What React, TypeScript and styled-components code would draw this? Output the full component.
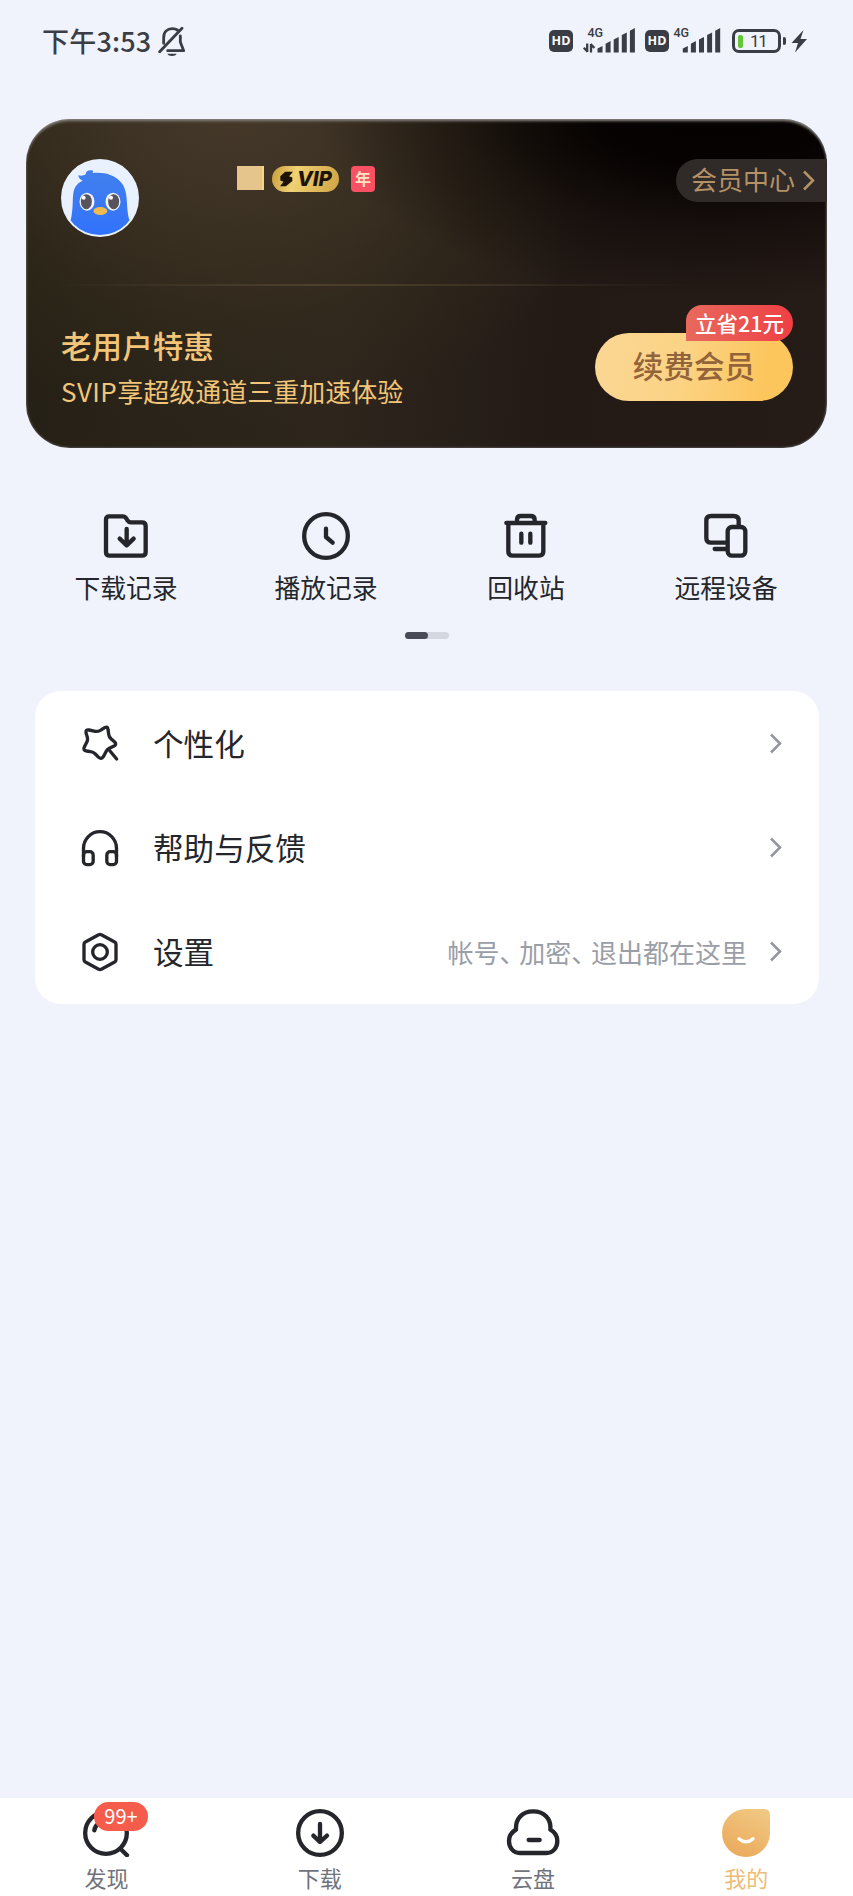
import React from 'react';
import styled, { createGlobalStyle } from 'styled-components';

const GlobalStyle = createGlobalStyle`
  * { box-sizing: border-box; }
  body {
    margin: 0;
    background: #f0f3fb;
    font-family: 'Noto Sans CJK SC', 'Noto Sans', sans-serif;
    color: #24262b;
  }
  svg { display: block; flex: none; }
`;

const Screen = styled.div`
  width: 853px;
  height: 1896px;
  display: flex;
  flex-direction: column;
  background: #f0f3fb;
  overflow: hidden;
  white-space: nowrap;
`;

/* ---------- status bar ---------- */

const StatusBar = styled.header`
  height: 119px;
  flex: none;
  padding: 25px 45px 0 42px;
  display: flex;
  justify-content: space-between;
  align-items: flex-start;
  color: #3a3d45;
`;

const Clock = styled.div`
  display: flex;
  align-items: center;
  gap: 7px;
  height: 32px;
`;

const Time = styled.span`
  font-size: 27px;
  font-weight: 500;
  line-height: 32px;
  letter-spacing: 0.2px;
`;

const Indicators = styled.div`
  display: flex;
  align-items: center;
  height: 32px;
`;

const HdBadge = styled.span`
  width: 24px;
  height: 22px;
  border-radius: 5px;
  background: #3a3d45;
  color: #fff;
  font: 700 12.5px/22px 'Open Sans', sans-serif;
  text-align: center;
`;

const Signal = styled.svg<{ $left: number; $right: number }>`
  margin: 0 ${p => p.$right}px 0 ${p => p.$left}px;
  overflow: visible;
`;

const Battery = styled.div`
  position: relative;
  width: 49px;
  height: 24px;
  margin-right: 10px;
  border: 3px solid #3a3d45;
  border-radius: 7px;
  display: flex;
  align-items: center;
  padding-left: 3px;
  font: 400 17px/18px Roboto, sans-serif;
  letter-spacing: -1.2px;

  &::after {
    content: '';
    position: absolute;
    left: 48px;
    top: 5px;
    width: 3px;
    height: 8px;
    border-radius: 1px 2px 2px 1px;
    background: #3a3d45;
  }
`;

const Charge = styled.i`
  width: 5px;
  height: 13px;
  border-radius: 2px;
  background: #62c637;
  margin-right: 7px;
`;

/* ---------- membership card ---------- */

const MemberCard = styled.section`
  width: 801px;
  height: 329px;
  flex: none;
  margin-left: 26px;
  border-radius: 44px;
  overflow: hidden;
  display: flex;
  flex-direction: column;
  box-shadow: inset 0 3px 3px -1px #85817c, inset 0 0 2px 1px #4b4744;
  background:
    radial-gradient(ellipse 400px 190px at 690px -10px, #040100 0%, rgba(4, 1, 0, 0.95) 30%, rgba(10, 4, 3, 0.45) 65%, rgba(10, 4, 3, 0) 100%),
    radial-gradient(ellipse 400px 330px at 205px -20px, rgba(70, 57, 42, 1) 0%, rgba(62, 51, 36, 0.8) 40%, rgba(54, 46, 28, 0.4) 70%, rgba(50, 42, 28, 0) 100%),
    linear-gradient(95deg, #252015 0%, #2e261d 40%, #231a16 66%, #251b17 100%);
`;

const Profile = styled.div`
  height: 164px;
  flex: none;
  padding: 40px 0 0 35px;
  display: flex;
  align-items: flex-start;
`;

const Badges = styled.div`
  display: flex;
  align-items: center;
  margin: 7px 0 0 98px;
  height: 26px;
`;

const NameBlock = styled.span`
  width: 27px;
  height: 24px;
  margin: 0 8px 2px 0;
  background: #e5c58b;
  border-right: 2px solid #f8d67d;
`;

const SvipPill = styled.span`
  width: 67px;
  height: 26px;
  border-radius: 13px;
  display: flex;
  align-items: center;
  padding-left: 8px;
  gap: 4px;
  background: linear-gradient(105deg, #c99d3b 0%, #f0d176 35%, #e6c162 55%, #cfa444 100%);
  color: #1d1304;
  font: italic 800 20.5px/26px Inter, sans-serif;
  letter-spacing: -0.1px;
`;

const YearBadge = styled.span`
  width: 24px;
  height: 26px;
  border-radius: 4px;
  margin-left: 12px;
  background: #fa5064;
  color: #ffe3c0;
  font-size: 16px;
  font-weight: 700;
  line-height: 24px;
  text-align: center;
`;

const CenterLink = styled.a`
  width: 151px;
  height: 43px;
  margin-left: auto;
  padding-left: 15px;
  border-radius: 22px 0 0 22px;
  background: #302a28;
  color: #b59167;
  display: flex;
  align-items: center;
  gap: 7px;
  font-size: 26px;
  line-height: 40px;
`;

const CenterText = styled.span`
  height: 43px;
`;

const Divider = styled.hr`
  width: 640px;
  height: 2px;
  flex: none;
  border: 0;
  margin: 1px 0 -1px 30px;
  background: linear-gradient(90deg, rgba(90, 74, 52, 0), rgba(90, 74, 52, 0.65) 40%, rgba(90, 74, 52, 0));
`;

const Offer = styled.div`
  flex: 1;
  display: flex;
  justify-content: space-between;
  padding: 0 34px 0 35px;
`;

const OfferText = styled.div`
  color: #f2c578;
  padding-top: 40px;
`;

const OfferTitle = styled.h2`
  margin: 0;
  font-size: 30.6px;
  font-weight: 500;
  line-height: 40px;
`;

const OfferDetail = styled.p`
  margin: 6px 0 0;
  font-size: 26px;
  line-height: 40px;
`;

const Latin = styled.span`
  letter-spacing: 0.4px;
`;

const RenewButton = styled.button`
  position: relative;
  width: 198px;
  height: 68px;
  margin: 48px 0 0;
  padding: 0 0 4px;
  border: 0;
  border-radius: 34px;
  background: linear-gradient(100deg, #fad795 0%, #fcd384 45%, #fcc65d 85%);
  color: #93643b;
  font: 500 30.6px/64px 'Noto Sans CJK SC', sans-serif;
`;

const SaveTag = styled.span`
  position: absolute;
  right: 0;
  top: -28px;
  width: 107px;
  height: 36px;
  border-radius: 16px 18px 18px 0;
  background: linear-gradient(90deg, #e8695d, #ef3f45);
  color: #fff;
  font-size: 21.5px;
  line-height: 35px;
  font-weight: 500;
`;

/* ---------- shortcuts ---------- */

const Shortcuts = styled.nav`
  display: grid;
  grid-template-columns: repeat(4, 200px);
  margin: 64px 0 0 26px;
  flex: none;
`;

const Shortcut = styled.div`
  display: flex;
  flex-direction: column;
  align-items: center;
  font-size: 25.8px;
  line-height: 36px;
  gap: 9px;
`;

const Pager = styled.div`
  width: 44px;
  height: 7px;
  flex: none;
  margin: 27px 0 0 405px;
  border-radius: 3.5px;
  background: #d4d7df;
`;

const PagerThumb = styled.div`
  width: 22.5px;
  height: 7px;
  border-radius: 3.5px;
  background: #484b56;
`;

/* ---------- settings list ---------- */

const Menu = styled.section`
  width: 784px;
  height: 313px;
  flex: none;
  margin: 52px 0 0 35px;
  border-radius: 26px;
  background: #fff;
  display: grid;
  grid-template-rows: repeat(3, 104.4px);
`;

const MenuRow = styled.div`
  display: flex;
  align-items: center;
  padding: 0 37px 0 45px;
`;

const MenuLabel = styled.span`
  margin-left: 33px;
  flex: 1;
  font-size: 30.6px;
  line-height: 40px;
  padding-bottom: 1px;
`;

const MenuHint = styled.span`
  margin-right: 22px;
  font-size: 26px;
  line-height: 40px;
  color: #9a9ea7;
`;

const Comma = styled.span`
  letter-spacing: -6.3px;
`;

/* ---------- bottom tabs ---------- */

const TabBar = styled.nav`
  height: 98px;
  flex: none;
  margin-top: auto;
  padding-top: 11px;
  background: #fff;
  display: grid;
  grid-template-columns: repeat(4, 1fr);
`;

const Tab = styled.div<{ $active?: boolean }>`
  position: relative;
  display: flex;
  flex-direction: column;
  align-items: center;
  font-size: 22px;
  line-height: 30px;
  gap: 5px;
  color: ${p => (p.$active ? '#eebc77' : '#6f737c')};
`;

const Count = styled.span`
  position: absolute;
  left: 94px;
  top: -7px;
  width: 54px;
  height: 29px;
  border-radius: 15px;
  background: #f65c4b;
  color: #fff;
  font-size: 20px;
  line-height: 27px;
  text-align: center;
`;

/* ---------- drawings ---------- */

const Line = styled.svg<{ $weight: number; $color?: string }>`
  fill: none;
  stroke: ${p => p.$color ?? '#24262b'};
  stroke-width: ${p => p.$weight};
  stroke-linecap: round;
  stroke-linejoin: round;
`;

const MutedBell = () => (
  <Line $weight={8.5} $color="#3a3d45" width="28" height="31" viewBox="474 78 84 93">
    <path d="M479 155 546 85M491 130V113C491 95 502 86 517 86C523 86 528 87 532 90M541 108V126L551 152H503" />
    <path d="M502 161H530C527 170 505 170 502 161Z" fill="#3a3d45" stroke="none" />
  </Line>
);

const SignalBars = ({ x }: { x: number }) => (
  <g transform={`translate(${x} 0)`}>
    {[6, 10.8, 15, 19.5, 23.8].map((h, i) => (
      <path key={h} d={`M${i * 8.1} 26.5V${28.5 - h}l5 -2.6V26.5Z`} />
    ))}
  </g>
);

const Network = ({ arrows }: { arrows?: boolean }) => {
  const w = arrows ? 53 : 48;
  return (
    <Signal $left={arrows ? 10 : 4} $right={arrows ? 9 : 11} width={w} height="30" viewBox={`0 0 ${w} 30`} fill="#3a3d45">
      <text x={arrows ? 4.5 : 0.5} y="10.5" fontFamily="Roboto" fontSize="12.5" fontWeight="500">4G</text>
      {arrows && <path d="M4.200 17.500V26M4.600 25.800 0.800 21.800M8 26.500V18M7.600 18 11.400 22" fill="none" stroke="#3a3d45" strokeWidth="2.300" />}
      <SignalBars x={arrows ? 14.5 : 9.8} />
    </Signal>
  );
};

const Bolt = () => (
  <svg width="17" height="23" viewBox="0 0 17 23" fill="#3a3d45">
    <path d="M12.500 0 0.500 13H7L4 22.500 16 9H9.500Z" />
  </svg>
);

const Avatar = () => (
  <svg width="78" height="78" viewBox="183 476 234 234">
    <defs>
      <clipPath id="face"><circle cx="300" cy="593" r="111" /></clipPath>
      <linearGradient id="feather" x1="0" y1="0" x2="0" y2="1">
        <stop offset="0" stopColor="#3f80ee" />
        <stop offset="0.55" stopColor="#3a78f4" />
        <stop offset="1" stopColor="#2f72fd" />
      </linearGradient>
    </defs>
    <circle cx="300" cy="593" r="117" fill="#e9f1fe" />
    <path
      clipPath="url(#face)"
      fill="url(#feather)"
      d="M211 664C222 625 215 588 223 566C228 553 238 545 248 541C240 538 236 532 235 525C243 528 252 526 257 522C258 512 266 508 279 511C280 514 279 516 277 518C312 514 344 523 364 547C388 575 376 625 389 660V710H211Z"
    />
    {[{ c: 261, p: 259, h: 251 }, { c: 339, p: 341, h: 333 }].map(e => (
      <g key={e.c}>
        <ellipse cx={e.c} cy="604" rx="22.500" ry="27" fill="#eef3ff" />
        <ellipse cx={e.p} cy="604" rx="16.500" ry="22.500" fill="#57525b" />
        <circle cx={e.h} cy="592" r="6" fill="#fff" />
      </g>
    ))}
    <ellipse cx="301" cy="632" rx="21" ry="12" fill="#efbb4c" />
  </svg>
);

const SvipMark = () => (
  <svg width="13" height="16" viewBox="841 517 40 47" fill="#1d1304">
    <path d="M857 518H881L869 532 879 536V547L859 563H841L852 549 842 545V532Z" />
  </svg>
);

const Chevron = ({ color }: { color: string }) => (
  <Line $weight={2.5} $color={color} width="13" height="21" viewBox="0 0 13 21">
    <path d="M2 1.500 11 10.500 2 19.500" strokeLinecap="butt" strokeLinejoin="miter" />
  </Line>
);

const shortcuts = [
  {
    label: '下载记录',
    box: '186 65 144 144',
    art: (
      <path d="M198 88Q198 78 208 78H248Q256 78 260 86L263 91Q266 96 273 96H306Q317 96 317 107V185Q317 196 306 196H209Q198 196 198 185ZM260 116V164M239 145 260 165 281 145" />
    ),
  },
  {
    label: '播放记录',
    box: '785 65 144 144',
    art: (
      <>
        <circle cx="857" cy="137" r="65.500" />
        <path d="M857 115V140L877 157" />
      </>
    ),
  },
  {
    label: '回收站',
    box: '185 65 144 144',
    art: (
      <path d="M198 98H315M230 98V88Q230 77 241 77H271Q283 77 283 88V98M204 98V183Q204 196 217 196H296Q309 196 309 183V98M243 130V157M270 130V157" />
    ),
  },
  {
    label: '远程设备',
    box: '785 65 144 144',
    art: (
      <>
        <path d="M856 157H812Q798 157 798 143V91Q798 77 812 77H880Q895 77 895 91V106M823 176H858" />
        <rect x="862" y="110" width="53" height="86" rx="13" />
      </>
    ),
  },
];

const menu = [
  {
    label: '个性化',
    box: '180 128 120 120',
    art: (
      <path d="M198 157Q197 147 207 149L226 153Q234 154 241 150L254 142Q263 137 264 147L266 162Q267 170 273 175L284 185Q291 192 282 197L268 204Q262 207 258 214L250 229Q244 238 236 231L226 221Q220 215 212 214L199 212Q188 209 193 200L201 184Q204 178 202 171ZM270 212 290 236" />
    ),
  },
  {
    label: '帮助与反馈',
    box: '180 442 120 120',
    art: (
      <>
        <path d="M190.500 528V503A49.500 50 0 0 1 289.500 503V528" />
        <rect x="190.500" y="513" width="29" height="39" rx="10" />
        <rect x="260.500" y="513" width="29" height="39" rx="10" />
      </>
    ),
  },
  {
    label: '设置',
    box: '180 755 120 120',
    hint: true,
    art: (
      <>
        <path d="M236 763.500Q240 761 244 763.500L284 785Q288 787 288 792V838Q288 843 284 845L244 866.500Q240 869 236 866.500L196 845Q192 843 192 838V792Q192 787 196 785Z" />
        <circle cx="240" cy="815" r="22" />
      </>
    ),
  },
];

export default function App() {
  return (
    <>
      <GlobalStyle />
      <Screen>
        <StatusBar>
          <Clock>
            <Time>下午3:53</Time>
            <MutedBell />
          </Clock>
          <Indicators>
            <HdBadge>HD</HdBadge>
            <Network arrows />
            <HdBadge>HD</HdBadge>
            <Network />
            <Battery>
              <Charge />
              11
            </Battery>
            <Bolt />
          </Indicators>
        </StatusBar>

        <MemberCard>
          <Profile>
            <Avatar />
            <Badges>
              <NameBlock />
              <SvipPill>
                <SvipMark />
                VIP
              </SvipPill>
              <YearBadge>年</YearBadge>
            </Badges>
            <CenterLink>
              <CenterText>会员中心</CenterText>
              <Chevron color="#b59167" />
            </CenterLink>
          </Profile>
          <Divider />
          <Offer>
            <OfferText>
              <OfferTitle>老用户特惠</OfferTitle>
              <OfferDetail>
                <Latin>SVIP</Latin>享超级通道三重加速体验
              </OfferDetail>
            </OfferText>
            <RenewButton>
              续费会员
              <SaveTag>立省21元</SaveTag>
            </RenewButton>
          </Offer>
        </MemberCard>

        <Shortcuts>
          {shortcuts.map(s => (
            <Shortcut key={s.label}>
              <Line $weight={13} width="48" height="48" viewBox={s.box}>{s.art}</Line>
              {s.label}
            </Shortcut>
          ))}
        </Shortcuts>
        <Pager>
          <PagerThumb />
        </Pager>

        <Menu>
          {menu.map(m => (
            <MenuRow key={m.label}>
              <Line $weight={10} width="40" height="40" viewBox={m.box}>{m.art}</Line>
              <MenuLabel>{m.label}</MenuLabel>
              {m.hint && (
                <MenuHint>
                  帐号<Comma>、</Comma>加密<Comma>、</Comma>退出都在这里
                </MenuHint>
              )}
              <Chevron color="#93969d" />
            </MenuRow>
          ))}
        </Menu>

        <TabBar>
          <Tab>
            <Line $weight={13} width="48" height="48" viewBox="249 85 144 144">
              <circle cx="318" cy="157" r="62.500" />
              <path d="M362 205 381 224M283 149Q285 137 294 130" />
            </Line>
            发现
            <Count>99+</Count>
          </Tab>
          <Tab>
            <Line $weight={13} width="48" height="48" viewBox="889 86 144 144">
              <circle cx="961" cy="158" r="65.500" />
              <path d="M961 131V183M941 166 961 185 982 166" />
            </Line>
            下载
          </Tab>
          <Tab>
            <Line $weight={13} width="54" height="48" viewBox="242 85 162 144">
              <path d="M284 217C262 217 251 199 251 181C251 166 260 154 272 147C270 115 290 92 323.500 92C357 92 378 115 375 147C388 154 396 166 396 181C396 199 385 217 363 217ZM310 178H343" />
            </Line>
            云盘
          </Tab>
          <Tab $active>
            <svg width="48" height="48" viewBox="891 86 144 144">
              <defs>
                <linearGradient id="mine" x1="0.8" y1="0" x2="0.3" y2="1">
                  <stop offset="0" stopColor="#f1c883" />
                  <stop offset="1" stopColor="#ebaa5c" />
                </linearGradient>
              </defs>
              <path d="M963 86H1017Q1035 86 1035 104V158A72 72 0 1 1 963 86Z" fill="url(#mine)" />
              <path d="M942 175Q963 194 984 175" fill="none" stroke="#fff" strokeWidth="10" strokeLinecap="round" />
            </svg>
            我的
          </Tab>
        </TabBar>
      </Screen>
    </>
  );
}
